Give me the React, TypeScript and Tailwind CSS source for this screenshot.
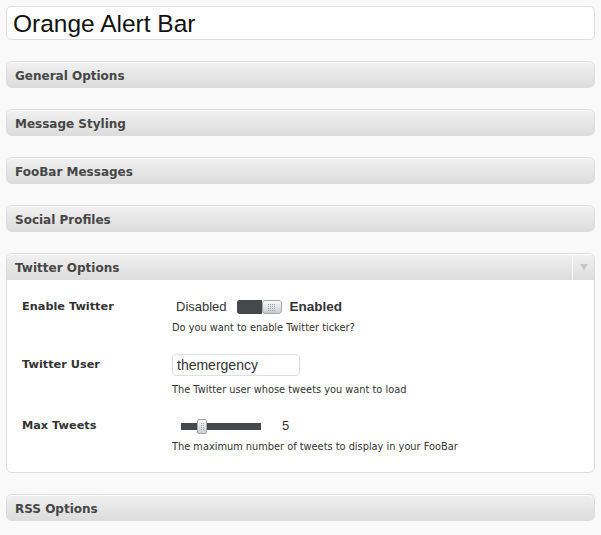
import React from 'react';

const verdana = { fontFamily: '"DejaVu Sans", Verdana, sans-serif' };
const arial = { fontFamily: '"Liberation Sans", Arial, sans-serif' };

function Grip({ cols, rows }: { cols: number; rows: number }) {
  const dots = [];
  for (let r = 0; r < rows; r++)
    for (let c = 0; c < cols; c++)
      dots.push(<rect key={`${r}-${c}`} x={c * 2} y={r * 2} width="1" height="1" fill="#9aa0a6" />);
  return (
    <svg width={cols * 2 - 1} height={rows * 2 - 1}>
      {dots}
    </svg>
  );
}

function Header({ title }: { title: string }) {
  return (
    <div className="h-[27px] flex items-center rounded-[6px] border border-[#dcdcdc] bg-gradient-to-b from-[#f1f1f1] to-[#dcdcdc] px-[8px] pt-[2px] shadow-[inset_0_1px_0_#fff]">
      <span className="text-[12px] font-bold text-[#464646]" style={verdana}>
        {title}
      </span>
    </div>
  );
}

function Toggle() {
  return (
    <div className="ml-[4px] flex items-center">
      <span className="text-[13px] text-[#333]" style={arial}>Disabled</span>
      <div className="ml-[10px] flex h-[14px] w-[45px] overflow-hidden rounded-[3px]">
        <div className="w-[25px] bg-[#46494c]" />
        <div className="flex flex-1 items-center justify-center rounded-[3px] border border-[#a3a7ab] bg-gradient-to-b from-[#fbfbfb] to-[#c9ccd0]">
          <Grip cols={4} rows={4} />
        </div>
      </div>
      <span className="ml-[8px] text-[13.5px] font-bold text-[#333]" style={arial}>Enabled</span>
    </div>
  );
}

function Slider() {
  return (
    <div className="flex items-center">
      <div className="relative ml-[9px] h-[7px] w-[80px] bg-[#46494c]">
        <div className="absolute left-[16px] top-[-4px] flex h-[15px] w-[10px] items-center justify-center rounded-[2px] border border-[#a3a7ab] bg-gradient-to-b from-[#fbfbfb] to-[#c9ccd0]">
          <Grip cols={2} rows={4} />
        </div>
      </div>
      <span className="ml-[21px] text-[13px] text-[#333]" style={arial}>5</span>
    </div>
  );
}

function Row({
  label,
  control,
  desc,
  descGap,
}: {
  label: string;
  control: React.ReactNode;
  desc: string;
  descGap: string;
}) {
  return (
    <div className="flex">
      <div className="flex h-[22px] w-[150px] shrink-0 items-center">
        <span className="text-[11.3px] font-bold text-[#333]" style={verdana}>
          {label}
        </span>
      </div>
      <div className="flex flex-col">
        <div className="flex h-[22px] items-center">{control}</div>
        <div className={`${descGap} text-[9.8px] leading-[14px] text-[#333]`} style={verdana}>
          {desc}
        </div>
      </div>
    </div>
  );
}

export default function App() {
  return (
    <div className="min-h-[535px] bg-[#f9f9f9] px-[6px] pt-[6px]">
      <div className="flex flex-col gap-[21px]">
        <div className="flex h-[34px] items-center rounded-[5px] border border-[#dfdfdf] bg-white px-[6px] pt-[2px]">
          <span className="text-[24.5px] text-[#111]" style={arial}>Orange Alert Bar</span>
        </div>
        <Header title="General Options" />
        <Header title="Message Styling" />
        <Header title="FooBar Messages" />
        <Header title="Social Profiles" />
        <div className="overflow-hidden rounded-[6px] border border-[#dcdcdc] bg-white">
          <div className="flex h-[26px] items-stretch bg-gradient-to-b from-[#f1f1f1] to-[#dcdcdc] shadow-[inset_0_1px_0_#fff]">
            <div className="flex flex-1 items-center px-[8px] pt-[2px]">
              <span className="text-[12px] font-bold text-[#464646]" style={verdana}>
                Twitter Options
              </span>
            </div>
            <div className="flex w-[22px] items-center justify-center border-l border-l-[#f8f8f8]">
              <svg width="8" height="6" viewBox="0 0 8 6">
                <polygon points="0,0 8,0 4,6" fill="#c4c4c4" />
              </svg>
            </div>
          </div>
          <div className="flex flex-col px-[15px] pt-[16px] pb-[18px]">
            <Row label="Enable Twitter" control={<Toggle />} desc="Do you want to enable Twitter ticker?" descGap="mt-[3px]" />
            <div className="mt-[19px]">
              <Row
                label="Twitter User"
                control={
                  <div className="flex h-[22px] w-[128px] items-center rounded-[4px] border border-[#dfdfdf] bg-white px-[4px]">
                    <span className="text-[14px] text-[#333]" style={arial}>themergency</span>
                  </div>
                }
                desc="The Twitter user whose tweets you want to load"
                descGap="mt-[7px]"
              />
            </div>
            <div className="mt-[18px]">
              <Row label="Max Tweets" control={<Slider />} desc="The maximum number of tweets to display in your FooBar" descGap="mt-[3px]" />
            </div>
          </div>
        </div>
        <Header title="RSS Options" />
      </div>
    </div>
  );
}
